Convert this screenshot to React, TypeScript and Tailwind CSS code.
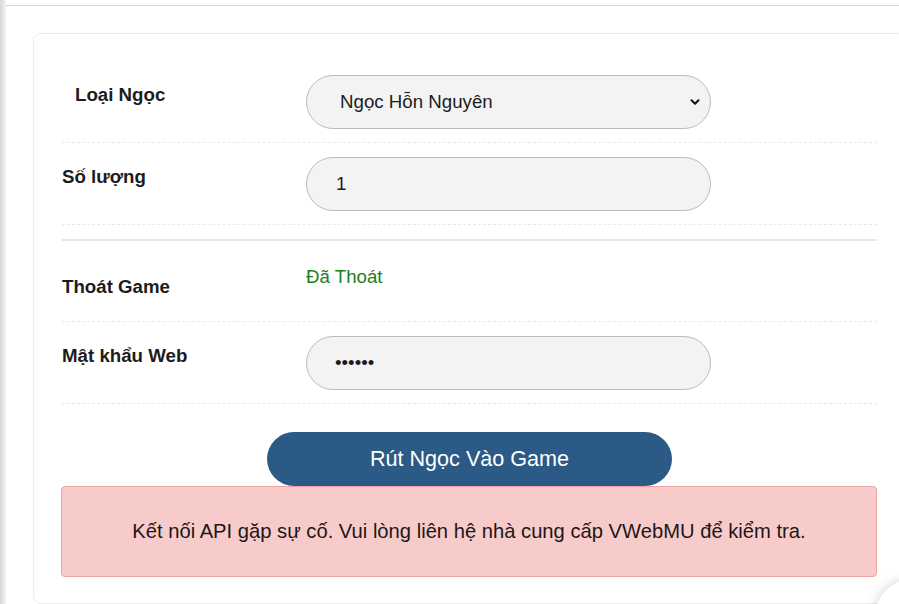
import { ChevronDown } from 'lucide-react';

const rowCls = 'flex border-b border-dashed border-[#e9e9e9] pt-[14px] pb-[13px]';
const labelCls = 'w-[244px] shrink-0 mt-[10px] text-[18.7px] leading-5 font-bold text-[#1c1c1c]';
const fieldCls =
  'w-[405px] h-[54px] rounded-full border border-[#bcbcbc] bg-[#f3f3f3] text-[18.7px] text-[#1c1c1c] outline-none';

export default function App() {
  return (
    <div className="relative h-[604px] w-[899px] overflow-hidden bg-white font-['Liberation_Sans',Arial,sans-serif]">
      <div className="flex h-full">
        <div className="w-[6px] shrink-0 bg-gradient-to-r from-[#d6d6d6] to-[#f4f4f4]" />
        <div className="min-w-0 flex-1">
          <div className="h-[6px] border-b border-[#d4d4d4]" />
          <div className="pl-[27px] pt-[27px]">
            <div className="w-[873px] rounded-lg border border-[#ececec] px-[28px] pt-[27px] pb-[26px]">
              <div className={rowCls}>
                <div className={`${labelCls} pl-[13px]`}>Loại Ngọc</div>
                <div className={`${fieldCls} flex items-center justify-between pl-[33px] pr-[8px]`}>
                  <span>Ngọc Hỗn Nguyên</span>
                  <ChevronDown size={14} strokeWidth={3.5} className="text-[#111]" />
                </div>
              </div>

              <div className={rowCls}>
                <div className={labelCls}>Số lượng</div>
                <input readOnly value="1" className={`${fieldCls} pl-[29px]`} />
              </div>

              <div className="mt-[14px] h-[2px] bg-[#e6e6e6]" />

              <div className="flex h-[81px] border-b border-dashed border-[#e9e9e9]">
                <div className="w-[244px] shrink-0 mt-[36px] text-[18.7px] leading-5 font-bold text-[#1c1c1c]">Thoát Game</div>
                <div className="mt-[26px] text-[18.7px] leading-5 text-[#1d7d1d]">Đã Thoát</div>
              </div>

              <div className={rowCls}>
                <div className={labelCls}>Mật khẩu Web</div>
                <input readOnly type="password" value="123456" className={`${fieldCls} pl-[28px]`} />
              </div>

              <div className="mt-[28px] flex justify-center">
                <button className="h-[54px] w-[405px] rounded-full bg-[#2a5a85] text-[21.6px] text-white">
                  Rút Ngọc Vào Game
                </button>
              </div>

              <div className="-ml-px flex h-[91px] items-center justify-center rounded-[4px] border border-[#f0a3a3] bg-[#f8cbcb] text-[20.2px] text-[#1e1616]">
                Kết nối API gặp sự cố. Vui lòng liên hệ nhà cung cấp VWebMU để kiểm tra.
              </div>
            </div>
          </div>
        </div>
      </div>
      <div className="absolute -bottom-[48px] -right-[48px] h-[72px] w-[72px] rounded-full bg-white shadow-[0_0_12px_rgba(0,0,0,0.18)]" />
    </div>
  );
}
